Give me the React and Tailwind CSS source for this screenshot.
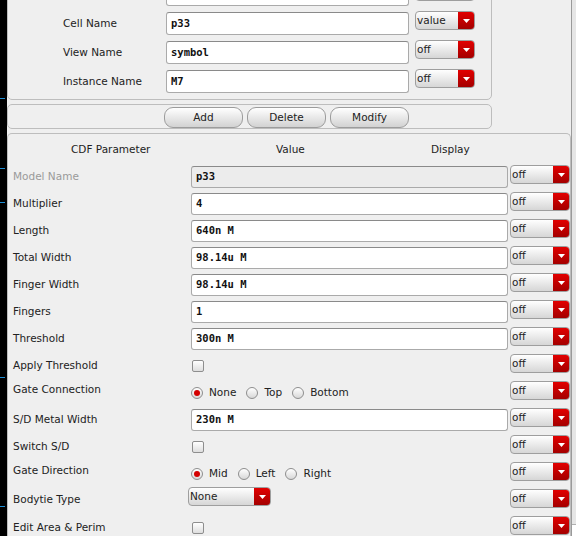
const sans = "font-['DejaVu_Sans',sans-serif]";
const mono = "font-['DejaVu_Sans_Mono',monospace]";

function Drop({ value = 'off', wide }) {
  return (
    <div
      className={`flex h-[19px] overflow-hidden rounded-[4px] border border-[#9e9e9e] bg-gradient-to-b from-white to-[#d6d6d6] ${
        wide ? 'w-[83px]' : 'w-[60px]'
      }`}
    >
      <span className="flex-1 pl-[1px] text-[10.5px] leading-[17px] text-[#222]">{value}</span>
      <span className="flex w-[16px] items-center justify-center bg-gradient-to-b from-[#e20000] to-[#a40000]">
        <svg width="7" height="4" viewBox="0 0 7 4">
          <path d="M0 0h7L3.5 4z" fill="#fff" />
        </svg>
      </span>
    </div>
  );
}

function Field({ value, w, h, disabled }) {
  return (
    <div
      className={`mt-[1px] flex items-center rounded-[3px] border border-[#aaa] border-t-[#8a8a8a] pl-[4px] ${mono} text-[10.5px] font-bold text-[#111] ${w} ${h} ${
        disabled ? 'bg-[#ececec]' : 'bg-white'
      }`}
    >
      {value}
    </div>
  );
}

function Check() {
  return (
    <div className="ml-[1px] mt-[6px] h-[12px] w-[12px] rounded-[2px] border border-[#8e8e8e] bg-gradient-to-b from-white to-[#dedede]" />
  );
}

function Radio({ on }) {
  return (
    <span className="flex h-[12px] w-[12px] items-center justify-center rounded-full border border-[#8e8e8e] bg-gradient-to-b from-white to-[#d8d8d8]">
      {on && <span className="h-[6px] w-[6px] rounded-full bg-[#d40000]" />}
    </span>
  );
}

function Radios({ items }) {
  return (
    <div className="mt-[6px] flex h-[12px] items-center text-[10.5px] text-[#222]">
      {items.map((t, i) => (
        <span key={t} className={`flex items-center ${i > 0 ? 'ml-[10px]' : ''}`}>
          <Radio on={i === 0} />
          <span className="ml-[6px]">{t}</span>
        </span>
      ))}
    </div>
  );
}

const topRows = [
  { label: 'Library Name', value: '', dd: 'off' },
  { label: 'Cell Name', value: 'p33', dd: 'value' },
  { label: 'View Name', value: 'symbol', dd: 'off' },
  { label: 'Instance Name', value: 'M7', dd: 'off' },
];

const params = [
  { label: 'Model Name', kind: 'input', value: 'p33', disabled: true },
  { label: 'Multiplier', kind: 'input', value: '4' },
  { label: 'Length', kind: 'input', value: '640n M' },
  { label: 'Total Width', kind: 'input', value: '98.14u M' },
  { label: 'Finger Width', kind: 'input', value: '98.14u M' },
  { label: 'Fingers', kind: 'input', value: '1' },
  { label: 'Threshold', kind: 'input', value: '300n M' },
  { label: 'Apply Threshold', kind: 'check' },
  { label: 'Gate Connection', kind: 'radio', items: ['None', 'Top', 'Bottom'] },
  { label: 'S/D Metal Width', kind: 'input', value: '230n M' },
  { label: 'Switch S/D', kind: 'check' },
  { label: 'Gate Direction', kind: 'radio', items: ['Mid', 'Left', 'Right'] },
  { label: 'Bodytie Type', kind: 'select' },
  { label: 'Edit Area & Perim', kind: 'check' },
];

const ticks = ['top-[98px]', 'top-[168px]', 'top-[202px]', 'top-[377px]', 'top-[506px]'];

export default function App() {
  return (
    <div className={`flex h-[536px] w-[576px] overflow-hidden bg-[#efefef] ${sans} text-[#222]`}>
      {/* dark strip on the left edge */}
      <div className="relative w-[7px] shrink-0 bg-black">
        {ticks.map((t) => (
          <div key={t} className={`absolute left-0 h-[1px] w-[5px] bg-[#1f8fd6] ${t}`} />
        ))}
      </div>

      <div className="flex w-[564px] shrink-0 flex-col">
        {/* instance panel */}
        <div className="-mt-[19px] w-[485px] rounded-b-[5px] border border-[#bdbdbd] pb-[1px]">
          {topRows.map((r) => (
            <div key={r.label} className="flex h-[29px] items-start">
              <div className="mt-[1px] flex h-[23px] w-[158px] items-center pl-[55px] text-[10.5px]">{r.label}</div>
              <Field value={r.value} w="w-[243px]" h="h-[23px]" />
              <div className="ml-[6px]">
                <Drop value={r.dd} />
              </div>
            </div>
          ))}
        </div>

        {/* buttons */}
        <div className="mt-[4px] flex h-[26px] w-[485px] gap-[4px] rounded-[5px] border border-[#bdbdbd] pl-[156px] pt-[2px]">
          {['Add', 'Delete', 'Modify'].map((b) => (
            <button
              key={b}
              className="h-[21px] w-[79px] rounded-[9px] border border-[#9c9c9c] bg-gradient-to-b from-white to-[#d2d2d2] text-[10.5px] text-[#222]"
            >
              {b}
            </button>
          ))}
        </div>

        {/* CDF parameters */}
        <div className="mt-[4px] flex-1 rounded-t-[5px] border border-b-0 border-[#bdbdbd]">
          <div className="flex h-[31px] items-center text-[10.5px]">
            <span className="w-[268px] pl-[63px]">CDF Parameter</span>
            <span className="w-[155px]">Value</span>
            <span>Display</span>
          </div>
          {params.map((p) => (
            <div key={p.label} className="flex h-[27px] items-start">
              <div
                className={`flex w-[183px] items-center pl-[5px] text-[10.5px] ${
                  p.kind === 'radio' ? 'h-[18px]' : p.kind === 'select' ? 'h-[22px]' : 'h-[24px]'
                } ${p.disabled ? 'text-[#9a9a9a]' : ''}`}
              >
                {p.label}
              </div>
              {p.kind === 'input' && <Field value={p.value} w="w-[317px]" h="h-[22px]" disabled={p.disabled} />}
              {p.kind === 'check' && <Check />}
              {p.kind === 'radio' && <Radios items={p.items} />}
              {p.kind === 'select' && (
                <div className="-ml-[3px] -mt-[2px]">
                  <Drop value="None" wide />
                </div>
              )}
              <div className="ml-auto">
                <Drop />
              </div>
            </div>
          ))}
        </div>
      </div>

      {/* scrollbar edge */}
      <div className="flex w-[5px] shrink-0 flex-col justify-end border-l border-[#9a9a9a] bg-[#e6e6e6]">
        <div className="mb-0 h-[12px] border-t border-[#b0b0b0] bg-white" />
      </div>
    </div>
  );
}
